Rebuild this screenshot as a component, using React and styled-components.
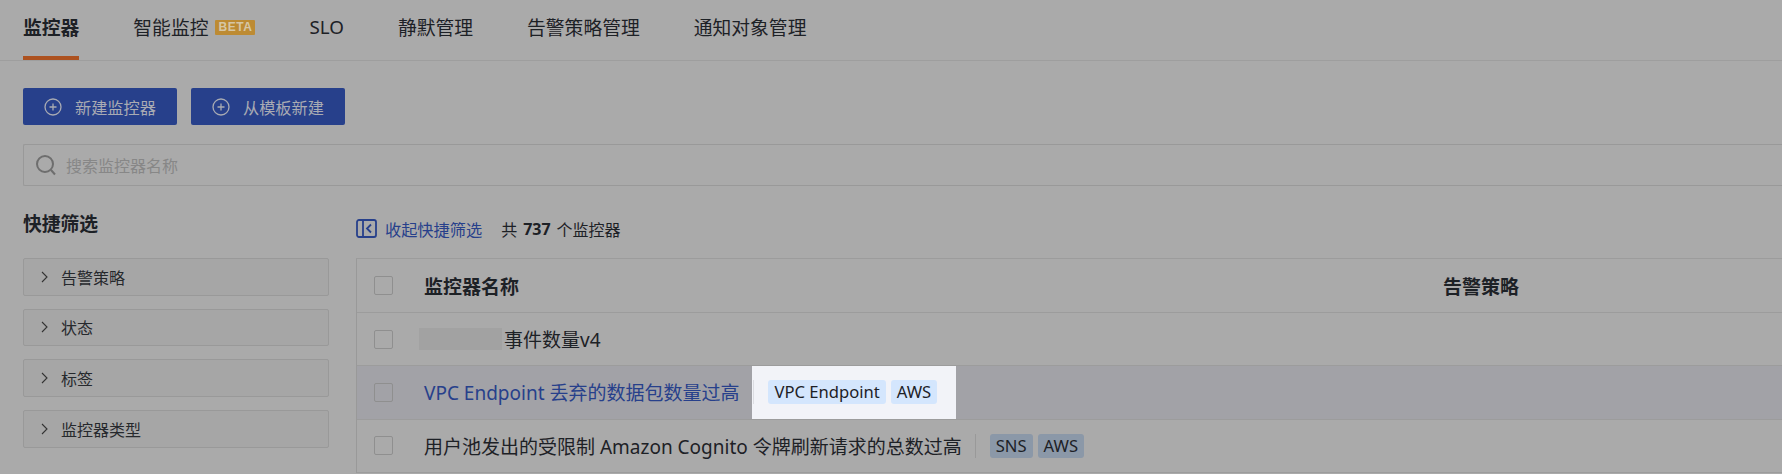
import React from 'react'
import styled, { createGlobalStyle } from 'styled-components'

const GlobalStyle = createGlobalStyle`
  html, body {
    margin: 0;
    background: #aaaaaa;
    overflow: hidden;
  }
  * { box-sizing: border-box; }
  body {
    font-family: "Noto Sans", "Noto Sans CJK SC", sans-serif;
    color: #1d2126;
  }
`

const Page = styled.div`
  width: 1782px;
  height: 474px;
  overflow: hidden;
  background: #aaaaaa;
`

const Tabs = styled.nav`
  display: flex;
  gap: 54px;
  height: 61px;
  padding-left: 23px;
  border-bottom: 1px solid #9e9e9e;
`

const Tab = styled.div`
  display: flex;
  align-items: center;
  gap: 7px;
  height: 60px;
  padding-bottom: 2px;
  font-size: 18.8px;
  font-weight: ${p => (p.$active ? 700 : 400)};
  border-bottom: 4px solid ${p => (p.$active ? '#ad5220' : 'transparent')};
`

const Beta = styled.span`
  width: 40px;
  height: 15px;
  border-radius: 1px;
  background: #bd8b33;
  color: #d6c6a6;
  font-family: "Liberation Sans", sans-serif;
  font-size: 12px;
  font-weight: 700;
  line-height: 15px;
  text-align: center;
  letter-spacing: 0.5px;
`

const Main = styled.div`
  padding: 27px 0 0 23px;
`

const Actions = styled.div`
  display: flex;
  gap: 14px;
`

const PrimaryButton = styled.button`
  display: flex;
  align-items: center;
  gap: 13px;
  width: 154px;
  height: 37px;
  padding: 0 0 0 21px;
  border: none;
  border-radius: 2px;
  background: #27408b;
  color: #a9abb3;
  font: inherit;
  font-size: 16.2px;
`

const SearchBar = styled.div`
  display: flex;
  align-items: center;
  gap: 9px;
  height: 42px;
  margin-top: 19px;
  padding-left: 11px;
  border: 1px solid #999999;
  border-right: none;
  border-radius: 2px 0 0 2px;
  color: #878787;
  font-size: 16px;
`

const Columns = styled.div`
  display: flex;
  gap: 27px;
  margin-top: 28px;
`

const Sidebar = styled.aside`
  width: 306px;
  flex: none;
`

const SidebarTitle = styled.h3`
  height: 44px;
  margin: 0;
  font-size: 18.8px;
  font-weight: 700;
  line-height: 20px;
`

const FilterList = styled.div`
  display: flex;
  flex-direction: column;
  gap: 13.2px;
`

const Filter = styled.div`
  display: flex;
  align-items: center;
  gap: 13px;
  height: 37.5px;
  padding-left: 17px;
  border: 1px solid #999999;
  border-radius: 2px;
  background: #a6a6a6;
  font-size: 16px;
  color: #26292d;
`

const Content = styled.section`
  flex: 1;
  min-width: 0;
`

const Summary = styled.div`
  display: flex;
  align-items: center;
  height: 44px;
  padding-bottom: 15px;
  font-size: 16px;
`

const Collapse = styled.span`
  display: flex;
  align-items: center;
  gap: 8px;
  margin-right: 19px;
  font-size: 16.2px;
  color: #27408b;
`

const Count = styled.b`
  margin: 0 6px;
  font-weight: 700;
`

const Table = styled.div`
  border-left: 1px solid #999999;
  border-top: 1px solid #9c9c9c;
`

const Row = styled.div`
  display: flex;
  align-items: center;
  height: ${p => (p.$head ? 54 : 53.3)}px;
  padding-left: 17px;
  border-bottom: 1px solid #9c9c9c;
  background: ${p => (p.$hover ? '#a2a2a7' : 'transparent')};
  font-size: 19px;
`

const Check = styled.span`
  flex: none;
  width: 19px;
  height: 19px;
  margin-right: 31px;
  border: 1px solid #8f8f8f;
  border-radius: 2px;
`

const HeadName = styled.div`
  width: 1019px;
  flex: none;
  font-weight: 700;
`

const HeadPolicy = styled.div`
  font-weight: 700;
`

const Masked = styled.span`
  width: 83px;
  height: 22px;
  margin: 0 2px 0 -5px;
  background: #a2a2a2;
`

const LinkName = styled.span`
  color: #27408b;
`

const TagCell = styled.div`
  display: flex;
  align-items: center;
  gap: 5px;
  height: 100%;
  margin-left: 13px;
  padding: 0 19px 0 ${p => (p.$lit ? 1 : 0)}px;
  background: ${p => (p.$lit ? '#f2f3f8' : 'transparent')};
`

const Divider = styled.i`
  width: 1px;
  height: 24px;
  margin-right: 9px;
  background: ${p => (p.$lit ? '#dcdde2' : '#999999')};
`

const Tag = styled.span`
  height: 24px;
  padding: 0 6px;
  border-radius: 3px;
  background: ${p => (p.$lit ? '#d4e6fd' : '#8b98a8')};
  color: #1d2126;
  font-size: 16.6px;
  line-height: 23px;
`

const PlusIcon = () => (
  <svg width="18" height="18" viewBox="0 0 18 18" fill="none" stroke="currentColor" strokeWidth="1.3">
    <circle cx="9" cy="9" r="8" />
    <path d="M9 5.5v7M5.5 9h7" />
  </svg>
)

const SearchIcon = () => (
  <svg width="22" height="22" viewBox="0 0 22 22" fill="none" stroke="#6e6e6e" strokeWidth="2">
    <circle cx="10" cy="10" r="8" />
    <path d="M16 16l4 4.5" />
  </svg>
)

const Chevron = () => (
  <svg width="7" height="12" viewBox="0 0 7 12" fill="none" stroke="#333333" strokeWidth="1.1">
    <path d="M1 1l5 5-5 5" />
  </svg>
)

const CollapseIcon = () => (
  <svg width="21" height="19" viewBox="0 0 21 19" fill="none" stroke="#27408b" strokeWidth="1.8">
    <rect x="1" y="1" width="19" height="17" rx="2" />
    <path d="M7 1v17" />
    <path d="M15 5.5l-4 4 4 4" />
  </svg>
)

const filters = ['告警策略', '状态', '标签', '监控器类型']

const App = () => {
  return (
    <Page>
      <GlobalStyle />
      <Tabs>
        <Tab $active>监控器</Tab>
        <Tab>智能监控<Beta>BETA</Beta></Tab>
        <Tab>SLO</Tab>
        <Tab>静默管理</Tab>
        <Tab>告警策略管理</Tab>
        <Tab>通知对象管理</Tab>
      </Tabs>
      <Main>
        <Actions>
          <PrimaryButton><PlusIcon />新建监控器</PrimaryButton>
          <PrimaryButton><PlusIcon />从模板新建</PrimaryButton>
        </Actions>
        <SearchBar><SearchIcon />搜索监控器名称</SearchBar>
        <Columns>
          <Sidebar>
            <SidebarTitle>快捷筛选</SidebarTitle>
            <FilterList>
              {filters.map(name => (
                <Filter key={name}><Chevron />{name}</Filter>
              ))}
            </FilterList>
          </Sidebar>
          <Content>
            <Summary>
              <Collapse><CollapseIcon />收起快捷筛选</Collapse>
              共<Count>737</Count>个监控器
            </Summary>
            <Table>
              <Row $head>
                <Check />
                <HeadName>监控器名称</HeadName>
                <HeadPolicy>告警策略</HeadPolicy>
              </Row>
              <Row>
                <Check />
                <Masked />
                事件数量v4
              </Row>
              <Row $hover>
                <Check />
                <LinkName>VPC Endpoint 丢弃的数据包数量过高</LinkName>
                <TagCell $lit>
                  <Divider $lit />
                  <Tag $lit>VPC Endpoint</Tag>
                  <Tag $lit>AWS</Tag>
                </TagCell>
              </Row>
              <Row>
                <Check />
                用户池发出的受限制 Amazon Cognito 令牌刷新请求的总数过高
                <TagCell>
                  <Divider />
                  <Tag>SNS</Tag>
                  <Tag>AWS</Tag>
                </TagCell>
              </Row>
            </Table>
          </Content>
        </Columns>
      </Main>
    </Page>
  )
}

export default App
